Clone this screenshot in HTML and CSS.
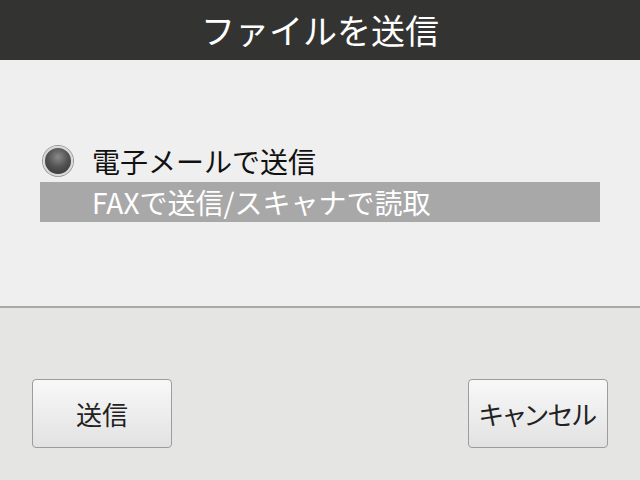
FILE: index.html
```html
<!DOCTYPE html>
<html lang="ja">
<head>
    <meta charset="UTF-8">
    <meta name="viewport" content="width=device-width, initial-scale=1.0">
    <title>ファイルを送信</title>
    <link rel="stylesheet" href="styles.css">
</head>
<body>
    <div class="screen">
        <!-- Title bar -->
        <div class="title-bar">ファイルを送信</div>

        <!-- Send method options -->
        <div class="options">
            <div class="option">
                <span class="radio"></span>
                <span class="option-label">電子メールで送信</span>
            </div>
            <div class="option selected">
                <span class="option-label">FAXで送信/スキャナで読取</span>
            </div>
        </div>

        <!-- Buttons -->
        <div class="footer">
            <button class="btn">送信</button>
            <button class="btn">キャンセル</button>
        </div>
    </div>
</body>
</html>
```

FILE: styles.css
```css
body {
    margin: 0;
    font-family: "Noto Sans CJK JP", "Noto Sans", sans-serif;
}

.screen {
    width: 640px;
    height: 480px;
    display: flex;
    flex-direction: column;
    overflow: hidden;
}

.title-bar {
    height: 60px;
    background-color: #333432;
    color: #ffffff;
    font-size: 34px;
    line-height: 60px;
    text-align: center;
}

.options {
    height: 246px;
    background-color: #efefef;
    padding: 80px 40px 0 40px;
    box-sizing: border-box;
    display: flex;
    flex-direction: column;
}

.option {
    height: 42px;
    display: flex;
    align-items: center;
    padding-left: 3px;
    font-size: 28px;
    color: #111111;
}

.option.selected {
    height: 40px;
    background-color: #a9a8a9;
    color: #ffffff;
    padding-left: 52px;
}

.radio {
    width: 26px;
    height: 26px;
    border-radius: 50%;
    border: 2px solid #d8d8d8;
    background: radial-gradient(circle at 50% 35%, #8a8a8a 0%, #555555 45%, #2e2e2e 100%);
    box-shadow: 0 0 0 1px #9a9a9a;
    margin-right: 19px;
}

.footer {
    flex: 1;
    border-top: 2px solid #a9a9a9;
    background-color: #e5e5e3;
    display: flex;
    justify-content: space-between;
    align-items: flex-start;
    padding: 71px 32px 0 32px;
}

.btn {
    width: 140px;
    height: 69px;
    border: 1px solid #9c9c9c;
    border-radius: 4px;
    background: linear-gradient(#f8f8f8, #e2e2e2);
    font-family: "Noto Sans CJK JP", "Noto Sans", sans-serif;
    font-size: 26px;
    color: #222222;
    font-feature-settings: "palt";
    padding: 0;
}
```
